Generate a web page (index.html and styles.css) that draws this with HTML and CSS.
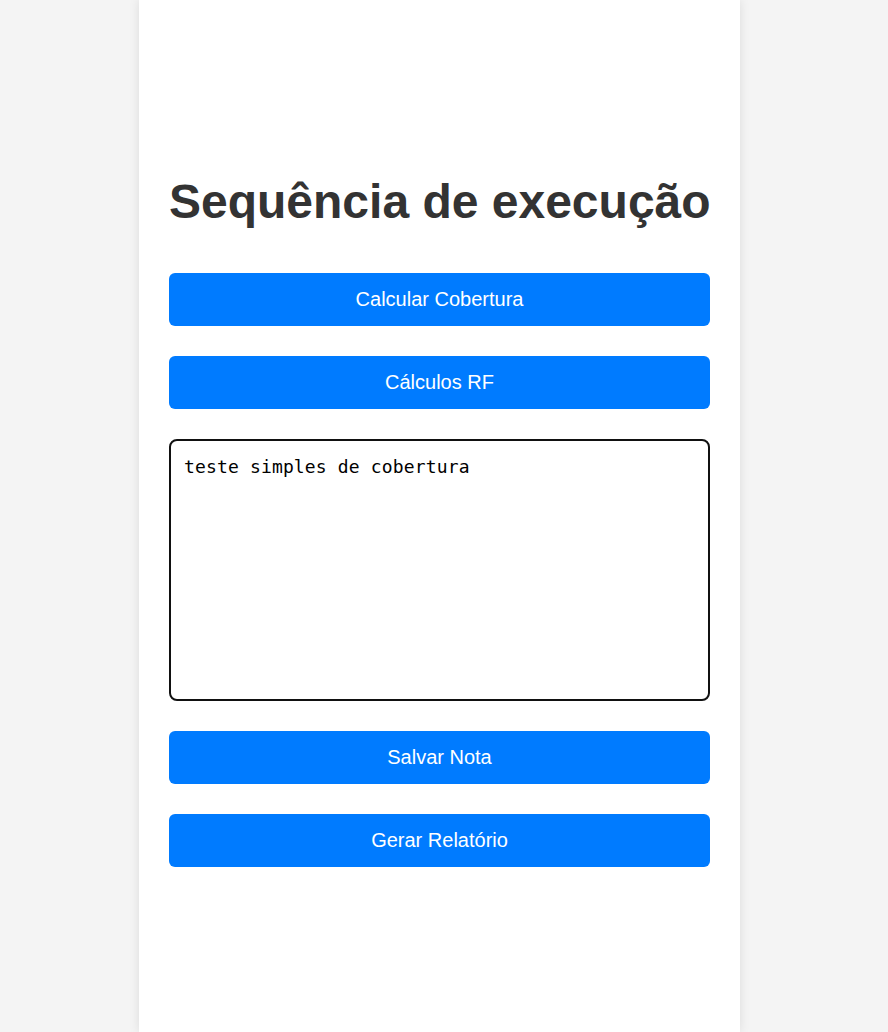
FILE: index.html
```html
<!DOCTYPE html>
<html lang="pt">
<head>
<meta charset="utf-8">
<title>Sequência de execução</title>
<link rel="stylesheet" href="styles.css">
</head>
<body>
  <main class="container">
    <h1 class="title">Sequência de execução</h1>
    <button class="btn" type="button">Calcular Cobertura</button>
    <button class="btn" type="button">Cálculos RF</button>
    <textarea class="note">teste simples de cobertura</textarea>
    <button class="btn" type="button">Salvar Nota</button>
    <button class="btn" type="button">Gerar Relatório</button>
  </main>
</body>
</html>
```
FILE: styles.css
```css
html, body {
  margin: 0;
  padding: 0;
}
body {
  background: #f4f4f4;
  font-family: "Liberation Sans", Arial, sans-serif;
  height: 1032px;
  overflow: hidden;
}
.container {
  box-sizing: border-box;
  width: 601px;
  min-height: 1032px;
  margin-left: 139px;
  background: #ffffff;
  box-shadow: 0 0 10px rgba(0, 0, 0, 0.1);
  padding: 174px 30px 0;
  display: flex;
  flex-direction: column;
  gap: 30px;
}
.title {
  margin: 0 0 14px;
  font-size: 48px;
  line-height: 55px;
  font-weight: bold;
  color: #333333;
  text-align: center;
  white-space: nowrap;
}
.btn {
  display: block;
  width: 100%;
  height: 53px;
  border: none;
  border-radius: 6px;
  background: #007bff;
  color: #ffffff;
  font-family: "Liberation Sans", Arial, sans-serif;
  font-size: 20px;
  padding: 0;
  cursor: pointer;
}
.note {
  box-sizing: border-box;
  width: 100%;
  height: 262px;
  border: 2.5px solid #111111;
  border-radius: 8px;
  padding: 15px 13px;
  font-family: "DejaVu Sans Mono", "Liberation Mono", monospace;
  font-size: 18px;
  letter-spacing: 0.15px;
  line-height: 21px;
  color: #000000;
  resize: none;
  outline: none;
  margin: 0;
}
```
